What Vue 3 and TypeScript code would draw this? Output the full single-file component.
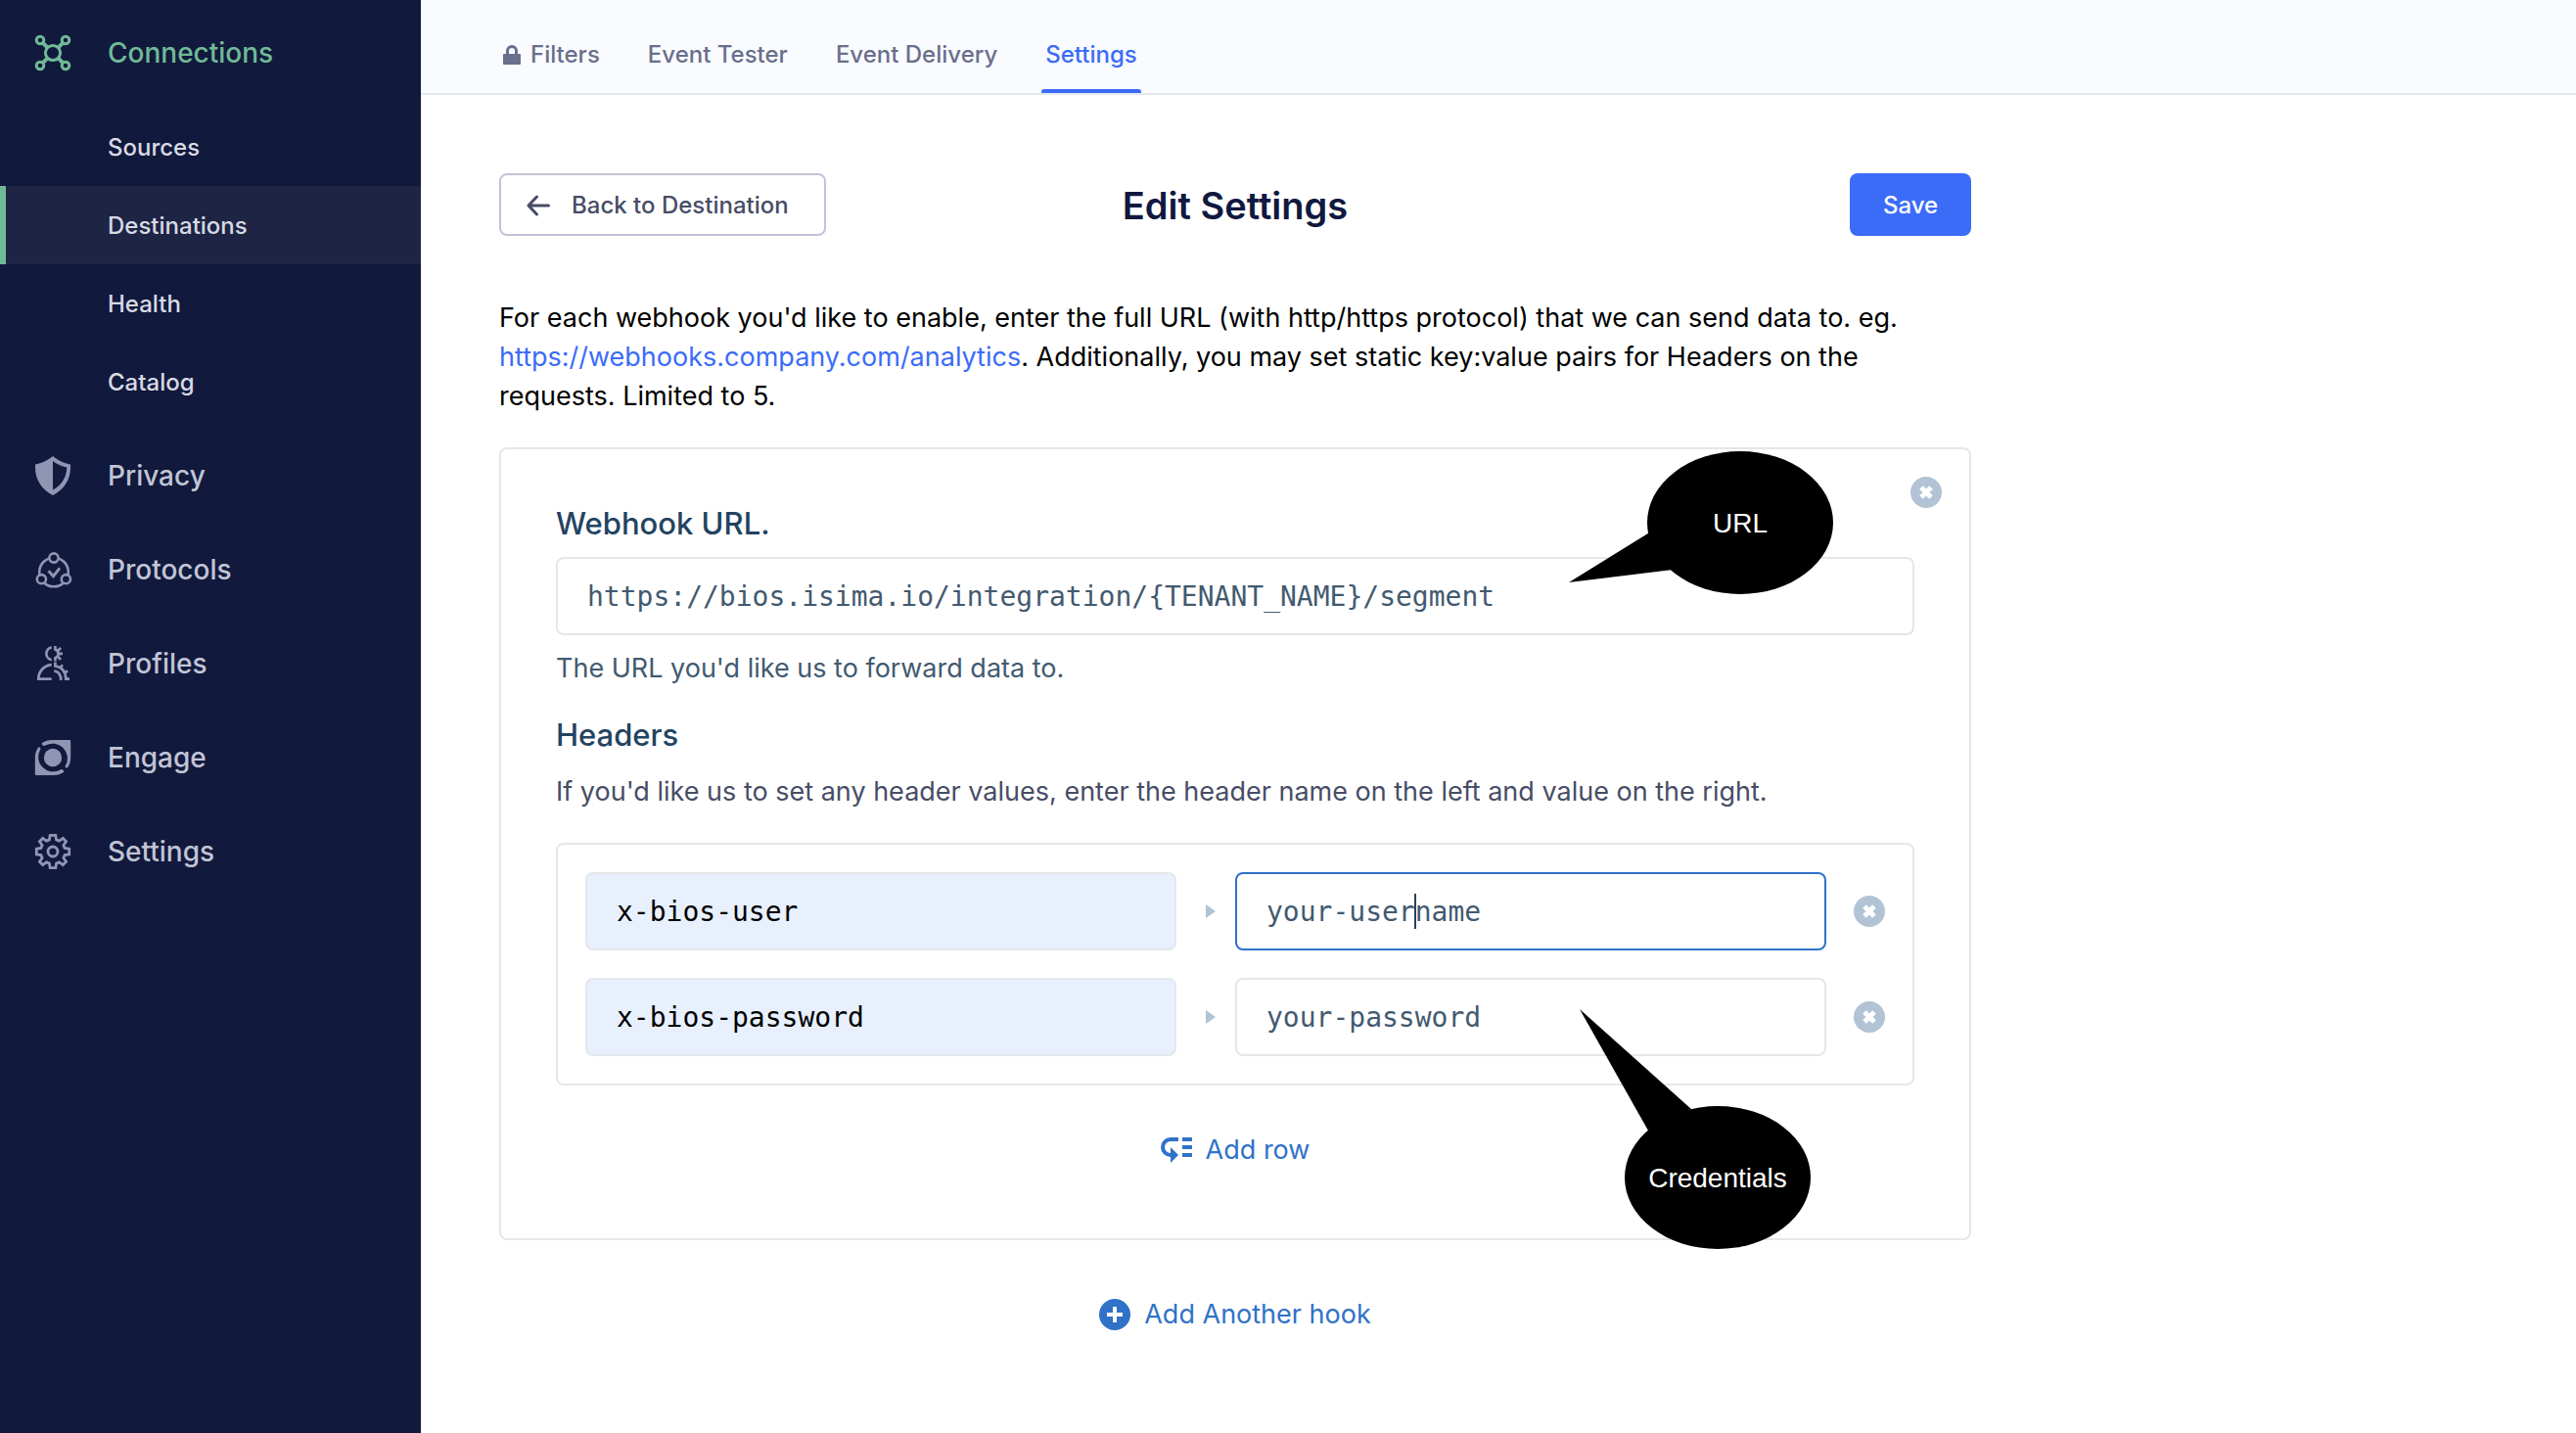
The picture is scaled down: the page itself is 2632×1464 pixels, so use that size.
<script setup lang="ts">
import { reactive, ref } from 'vue'

interface HeaderRow {
  name: string
  value: string
  active: boolean
}

const subItems = ['Sources', 'Destinations', 'Health', 'Catalog']
const mainItems = ['Privacy', 'Protocols', 'Profiles', 'Engage', 'Settings']
const tabs = ['Filters', 'Event Tester', 'Event Delivery', 'Settings']

const webhookUrl = ref('https://bios.isima.io/integration/{TENANT_NAME}/segment')
const rows = reactive<HeaderRow[]>([
  { name: 'x-bios-user', value: 'your-username', active: true },
  { name: 'x-bios-password', value: 'your-password', active: false },
])

function addRow(): void {
  if (rows.length < 5) rows.push({ name: '', value: '', active: false })
}

function removeRow(index: number): void {
  rows.splice(index, 1)
}
</script>

<template>
  <div class="app">
    <nav class="sidebar" aria-label="Workspace">
      <a href="#" class="item current">
        <svg class="icon" viewBox="0 0 40 40" fill="none" stroke="currentColor" stroke-width="3">
          <circle cx="20" cy="20" r="7.6" />
          <circle cx="7" cy="7" r="3.8" />
          <circle cx="33" cy="7" r="3.8" />
          <circle cx="7" cy="33" r="3.8" />
          <circle cx="33" cy="33" r="3.8" />
          <path d="M9.8 9.8l4.8 4.8M30.2 9.8l-4.8 4.8M9.8 30.2l4.8-4.8M30.2 30.2l-4.8-4.8" stroke-width="4" />
        </svg>
        <span>Connections</span>
      </a>
      <div class="sublist">
        <a
          v-for="name in subItems"
          :key="name"
          href="#"
          class="subitem"
          :class="{ selected: name === 'Destinations' }"
        >{{ name }}</a>
      </div>
      <a v-for="name in mainItems" :key="name" href="#" class="item">
        <svg v-if="name === 'Privacy'" class="icon" viewBox="0 0 40 40" fill="currentColor">
          <path fill-rule="evenodd" d="M20 0C15 4 8 7.6 2 8.4V12c0 12 7 22.5 18 28 11-5.5 18-16 18-28V8.400C32 7.600 25 4 20 0zM20 5c4 3 9 5.600 14.200 6.600C34.200 21 29.500 29.500 20 34.600z" />
        </svg>
        <svg v-else-if="name === 'Protocols'" class="icon" viewBox="0 0 40 40" fill="none" stroke="currentColor" stroke-width="2.6">
          <circle cx="21" cy="22.5" r="14.8" />
          <circle class="node" cx="21" cy="8" r="4.6" />
          <circle class="node" cx="8.4" cy="29.7" r="4.6" />
          <circle class="node" cx="33.4" cy="29.7" r="4.6" />
          <path d="M15.5 21.2l5 5.400 6.500-8.200" stroke-width="3" />
        </svg>
        <svg v-else-if="name === 'Profiles'" class="icon" viewBox="0 0 40 40" fill="none" stroke="currentColor" stroke-width="2.7">
          <path d="M18.700 3.400a6.500 6.500 0 0 0 0 12.800" />
          <path d="M18.700 21.200C11 21.800 5.300 28 5.300 35.700H18.700" />
          <path d="M22.400 2v3.400a4.700 4.700 0 0 1 0 8.900v3.200M25.500 6.500l2.600-2.600M26.500 9.900h3.500M25.500 13.300l2.600 2.600" />
          <path d="M22.400 18.500v4C29.500 23.300 33 28.500 33.300 35.700H37M21.300 27.300C26 28 28.300 31 28.300 37M27.500 24.500l2.400-3.200M31.500 29.700l3.700-2.200" />
        </svg>
        <svg v-else-if="name === 'Engage'" class="icon" viewBox="0 0 40 40" fill="currentColor">
          <circle cx="20" cy="20" r="9.2" />
          <path d="M9 5C12 3 15.500 2 19 2H37.200a1 1 0 0 1 1 1V20c0 4-1 7.500-3.200 10.300-1.200 1-3-.4-2.200-2A15 15 0 0 0 12.500 7.600C10.500 9 8 6.500 9 5z" />
          <path d="M31 35C28 37 24.500 38 21 38H2.800a1 1 0 0 1-1-1V20c0-4 1-7.500 3.200-10.300 1.200-1 3 .4 2.200 2A15 15 0 0 0 27.500 32.400C29.500 31 32 33.500 31 35z" />
        </svg>
        <svg v-else class="icon" viewBox="0 0 40 40" fill="none" stroke="currentColor" stroke-width="2.8">
          <circle cx="20" cy="20" r="5" />
          <path d="M17.200 3.300h5.600l.8 4.600 2.900 1.200 3.800-2.700 3.300 3.300-2.700 3.800 1.200 2.900 4.600.8v5.600l-4.600.8-1.200 2.900 2.700 3.800-3.300 3.300-3.800-2.700-2.900 1.200-.8 4.600h-5.600l-.8-4.600-2.900-1.200-3.800 2.700-3.300-3.300 2.700-3.800-1.200-2.900-4.600-.8v-5.600l4.600-.8 1.200-2.900-2.700-3.800 3.300-3.300 3.800 2.700 2.900-1.200z" />
        </svg>
        <span>{{ name }}</span>
      </a>
    </nav>

    <div class="main">
      <header class="tabs">
        <a v-for="(tab, i) in tabs" :key="tab" href="#" class="tab" :class="{ active: i === 3 }">
          <svg v-if="i === 0" class="lock" viewBox="0 0 18 20" fill="currentColor">
            <path fill-rule="evenodd" d="M3 9V6a6 6 0 0 1 12 0v3h2a1 1 0 0 1 1 1v9a1 1 0 0 1-1 1H1a1 1 0 0 1-1-1v-9a1 1 0 0 1 1-1zM6 9h6V6a3 3 0 0 0-6 0z" />
          </svg>
          {{ tab }}
        </a>
      </header>

      <main class="content">
        <div class="heading">
          <button type="button" class="back">
            <svg class="arrow" viewBox="0 0 24 22" fill="none" stroke="currentColor" stroke-width="3" stroke-linecap="round" stroke-linejoin="round">
              <path d="M10.500 2L2 11l8.500 9M2.500 11H22.500" />
            </svg>
            Back to Destination
          </button>
          <h1>Edit Settings</h1>
          <button type="button" class="save">Save</button>
        </div>

        <p class="intro">
          For each webhook you'd like to enable, enter the full URL (with http/https protocol) that we can send data to. eg.
          <a href="#">https://webhooks.company.com/analytics</a>. Additionally, you may set static key:value pairs for Headers on the
          requests. Limited to 5.
        </p>

        <section class="card">
          <button type="button" class="remove card-remove" aria-label="Remove webhook">
            <svg viewBox="0 0 32 32"><circle cx="16" cy="16" r="16" /><path d="M11 11l10 10M21 11L11 21" /></svg>
          </button>
          <label class="title" for="webhook-url">Webhook URL.</label>
          <input id="webhook-url" v-model="webhookUrl" class="field url" type="text" spellcheck="false" />
          <p class="help">The URL you'd like us to forward data to.</p>
          <h2 class="title headers-title">Headers</h2>
          <p class="hint">If you'd like us to set any header values, enter the header name on the left and value on the right.</p>

          <div class="rows">
            <div v-for="(row, i) in rows" :key="i" class="row">
              <input v-model="row.name" class="field filled" type="text" aria-label="Header name" spellcheck="false" />
              <svg class="pointer" viewBox="0 0 10 14"><path d="M0 0l10 7-10 7z" /></svg>
              <div class="value">
                <input v-model="row.value" class="field" :class="{ focused: row.active }" type="text" aria-label="Header value" spellcheck="false" />
                <span v-if="row.active" class="caret"></span>
              </div>
              <button type="button" class="remove" aria-label="Remove row" @click="removeRow(i)">
                <svg viewBox="0 0 32 32"><circle cx="16" cy="16" r="16" /><path d="M11 11l10 10M21 11L11 21" /></svg>
              </button>
            </div>
          </div>

          <button type="button" class="add add-row" @click="addRow">
            <svg viewBox="0 0 32 32" fill="currentColor">
              <path d="M22 3h10v4H22zM22 11h10v4H22zM22 19h10v4H22z" />
              <path d="M18 3v4h-8a6 6 0 0 0 0 12v-6l8 8-8 8v-6A10 10 0 0 1 10 3z" />
            </svg>
            Add row
          </button>

          <div class="callout callout-url">
            <svg viewBox="0 0 270 146"><ellipse cx="175" cy="73" rx="95" ry="73" /><path d="M0 134l84-52 22 39z" /></svg>
            <span>URL</span>
          </div>
          <div class="callout callout-credentials">
            <svg viewBox="0 0 236 245"><ellipse cx="141" cy="172" rx="95" ry="73" /><path d="M0 0l114 102-44 22z" /></svg>
            <span>Credentials</span>
          </div>
        </section>

        <button type="button" class="add add-hook">
          <svg viewBox="0 0 32 32" fill="currentColor">
            <path fill-rule="evenodd" d="M16 0a16 16 0 1 1 0 32 16 16 0 0 1 0-32zM14 8v6H8v4h6v6h4v-6h6v-4h-6V8z" />
          </svg>
          Add Another hook
        </button>
      </main>
    </div>
  </div>
</template>

<style>
body {
  margin: 0;
  background: #fff;
}
</style>

<style scoped>
.app {
  display: flex;
  min-height: 100vh;
  font-family: Inter, "Noto Sans", sans-serif;
  font-size: 27px;
  line-height: 40px;
  color: #000;
}

.app *,
.app *::before {
  box-sizing: border-box;
}

a {
  text-decoration: none;
  color: inherit;
}

button {
  margin: 0;
  padding: 0;
  border: 0;
  background: none;
  font: inherit;
  color: inherit;
  cursor: pointer;
}

p,
h1,
h2 {
  margin: 0;
}

svg {
  display: block;
  flex: none;
}

.sidebar {
  flex: none;
  width: 430px;
  padding-top: 6px;
  background: #11193c;
  color: #8f95b2;
}

.item {
  display: flex;
  align-items: center;
  gap: 36px;
  height: 96px;
  padding-left: 34px;
  font-size: 28px;
  font-weight: 500;
}

.item span {
  color: #c1c4d6;
}

.item.current,
.item.current span {
  color: #70ba97;
}

.icon {
  width: 40px;
  height: 40px;
}

.node {
  fill: #11193c;
}

.sublist {
  padding: 8px 0;
}

.subitem {
  display: flex;
  align-items: center;
  height: 80px;
  padding: 2px 0 0 104px;
  border-left: 6px solid transparent;
  font-size: 24px;
  font-weight: 500;
  color: #d8dae5;
}

.subitem.selected {
  border-left-color: #70ba97;
  background: #1d2444;
}

.main {
  flex: 1;
  min-width: 0;
}

.tabs {
  display: flex;
  gap: 41px;
  height: 97px;
  padding-left: 80px;
  border-bottom: 2px solid #e6e8f0;
  background: #fafbff;
  font-size: 24px;
  font-weight: 500;
  color: #696f8c;
}

.tab {
  position: relative;
  display: flex;
  align-items: center;
  gap: 10px;
  height: 95px;
  padding: 16px 4px 0;
}

.tab.active {
  color: #3b6cf8;
}

.tab.active::before {
  content: "";
  position: absolute;
  left: 0;
  right: 0;
  bottom: 0;
  height: 4px;
  border-radius: 3px 3px 0 0;
  background: #3b6cf8;
}

.lock {
  width: 18px;
  height: 20px;
}

.content {
  display: flex;
  flex-direction: column;
  max-width: 1664px;
  padding: 80px;
}

.heading {
  display: grid;
  grid-template-columns: 1fr auto 1fr;
  align-items: center;
}

.back,
.save {
  height: 64px;
  padding-top: 2px;
  border-radius: 8px;
  font-size: 24px;
  font-weight: 500;
}

.back {
  display: flex;
  justify-self: start;
  align-items: center;
  gap: 22px;
  padding-right: 36px;
  padding-left: 26px;
  border: 2px solid #c1c4d6;
  color: #474d66;
}

.arrow {
  width: 24px;
  height: 22px;
}

.save {
  justify-self: end;
  width: 124px;
  background: #3b6cf8;
  color: #fff;
}

h1 {
  padding-top: 2px;
  font-size: 38px;
  font-weight: 600;
  color: #101840;
}

.intro {
  margin-top: 64px;
}

.intro a {
  color: #3b6cf8;
}

.card {
  position: relative;
  display: flex;
  flex-direction: column;
  margin-top: 32px;
  padding: 56px 56px 70px;
  border: 2px solid #e4e7eb;
  border-radius: 8px;
}

.title {
  font-size: 31px;
  font-weight: 500;
  color: #234361;
}

.field {
  width: 100%;
  height: 80px;
  padding: 0 30px;
  border: 2px solid #e4e7eb;
  border-radius: 8px;
  outline: none;
  background: #fff;
  font-family: "DejaVu Sans Mono", monospace;
  font-size: 28px;
  color: #425a70;
}

.field.filled {
  background: #e8f0fe;
  color: #000;
}

.field.focused {
  border-color: #2f72c8;
}

.url {
  margin-top: 14px;
}

.help {
  margin-top: 14px;
  color: #425a70;
}

.headers-title {
  margin-top: 28px;
}

.hint {
  margin-top: 18px;
  color: #474d66;
}

.rows {
  display: flex;
  flex-direction: column;
  gap: 28px;
  margin-top: 32px;
  padding: 28px;
  border: 2px solid #e4e7eb;
  border-radius: 8px;
}

.row {
  display: grid;
  grid-template-columns: 1fr 60px 1fr 60px;
  align-items: center;
}

.pointer {
  justify-self: center;
  width: 10px;
  height: 14px;
  margin-left: 10px;
  fill: #b1c3d5;
}

.value {
  position: relative;
  font-family: "DejaVu Sans Mono", monospace;
  font-size: 28px;
}

.caret {
  position: absolute;
  top: 22px;
  left: calc(31px + 9ch);
  width: 2px;
  height: 36px;
  background: #234361;
}

.remove {
  justify-self: end;
  width: 32px;
  height: 32px;
}

.remove circle {
  fill: #b1c3d5;
}

.remove path {
  fill: none;
  stroke: #fff;
  stroke-width: 5;
}

.card-remove {
  position: absolute;
  top: 28px;
  right: 28px;
}

.add {
  display: flex;
  align-self: center;
  align-items: center;
  gap: 14px;
  color: #2f72c8;
}

.add svg {
  width: 32px;
  height: 32px;
}

.add-row {
  margin-top: 46px;
}

.add-hook {
  margin-top: 56px;
}

.callout {
  position: absolute;
  font-family: "Liberation Sans", Arial, sans-serif;
  font-size: 28px;
  color: #fff;
}

.callout span {
  position: absolute;
  right: 0;
  bottom: 52px;
  width: 190px;
  text-align: center;
}

.callout-url {
  top: 2px;
  right: 139px;
  width: 270px;
}

.callout-credentials {
  top: 572px;
  right: 162px;
  width: 236px;
}
</style>
